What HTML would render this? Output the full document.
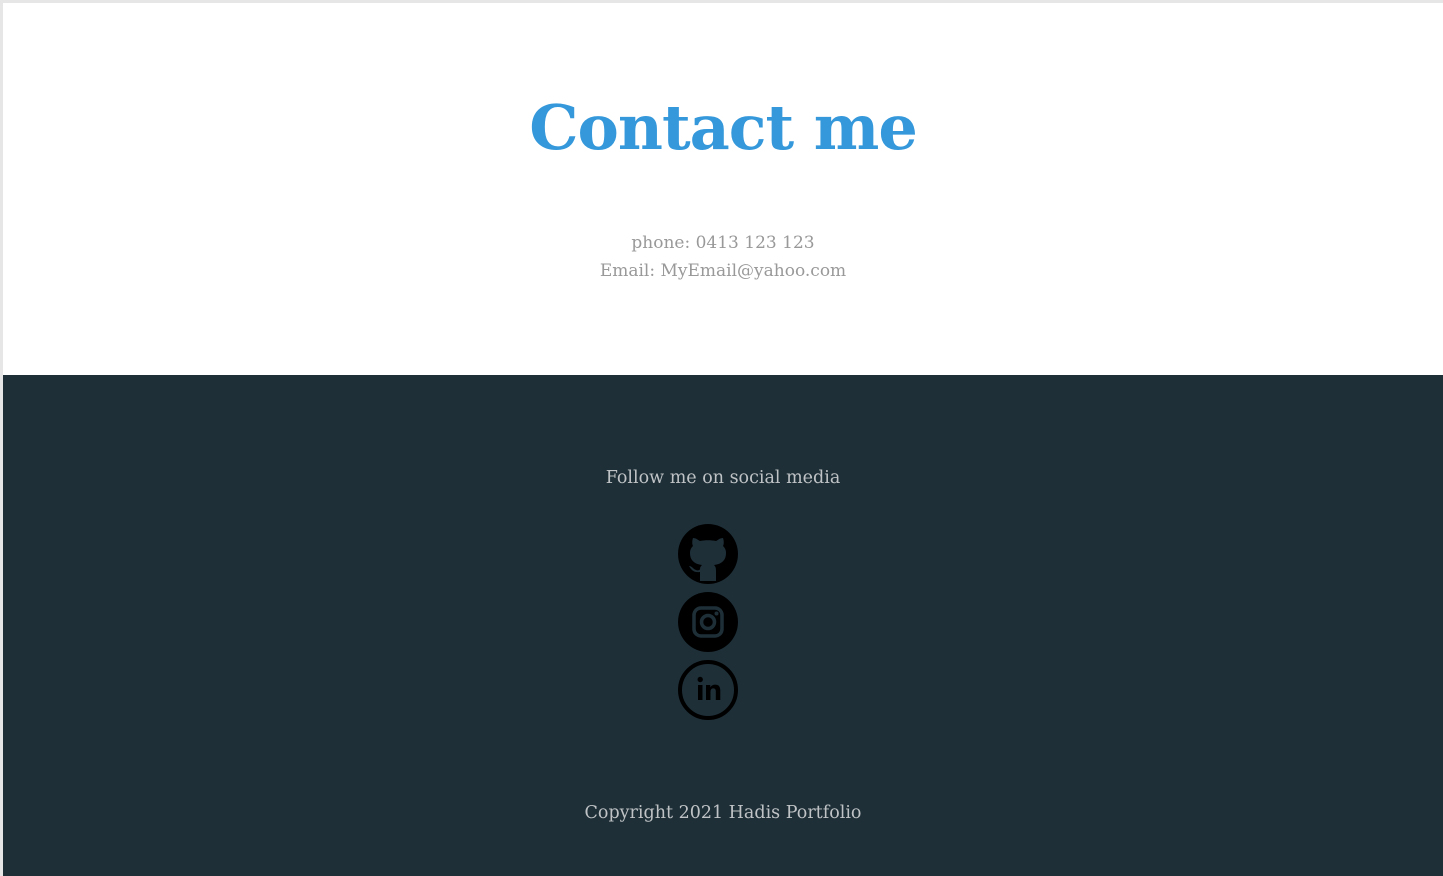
<!DOCTYPE html>
<html><head><style>
html,body{margin:0;padding:0;width:1443px;height:876px;overflow:hidden;background:#e6e6e6}
.top{position:absolute;left:3px;top:3px;width:1440px;height:372px;background:#fff;text-align:center;font-family:"DejaVu Serif","Liberation Serif",serif}
h1{margin:0;position:absolute;left:0;right:0;top:85px;font-size:62px;line-height:80px;color:#3498db;font-weight:bold;letter-spacing:-1px}
.info{position:absolute;left:0;right:0;top:226px;color:#999;font-size:17px;line-height:28px}
.foot{position:absolute;left:3px;top:375px;width:1440px;height:501px;background:#1e2f38;text-align:center;font-family:"DejaVu Serif","Liberation Serif",serif;color:#bfc3c5}
.f1{position:absolute;left:0;right:0;top:93px;font-size:17.5px}
.copy{position:absolute;left:0;right:0;top:428px;font-size:17.5px}
svg{position:absolute;left:675px}
</style></head><body>
<div class="top"><h1>Contact me</h1>
<div class="info">phone: 0413 123 123<br>Email: MyEmail@yahoo.com</div></div>
<div class="foot">
<div class="f1">Follow me on social media</div>
<svg style="top:149px" width="60" height="60" viewBox="0 0 60 60"><circle cx="30" cy="30" r="30" fill="#000"/><path d="M22 57 L22 48 C15 49 13 45 11 42 C14 42 15 45 18 46 C20 47 22 46 22 45 C22 43 23 42 24 41 C16 40 12 36 12 29 C12 26 13 24 15 22 C14 20 14 17 15 14 C18 14 20 16 22 17 C27 16 33 16 38 17 C40 16 42 14 45 14 C46 17 46 20 45 22 C47 24 48 26 48 29 C48 36 44 40 36 41 C38 43 38 45 38 47 L38 57 Z" fill="#1e2f38"/></svg>
<svg style="top:217px" width="60" height="60" viewBox="0 0 60 60"><circle cx="30" cy="30" r="30" fill="#000"/><rect x="16" y="16" width="28" height="28" rx="7" fill="none" stroke="#1e2f38" stroke-width="3.5"/><circle cx="30" cy="30" r="6.5" fill="none" stroke="#1e2f38" stroke-width="3.5"/><circle cx="38.5" cy="21.5" r="2" fill="#1e2f38"/></svg>
<svg style="top:285px" width="60" height="60" viewBox="0 0 60 60"><circle cx="30" cy="30" r="28" fill="none" stroke="#000" stroke-width="4"/><rect x="20" y="25" width="4.5" height="15" fill="#000"/><circle cx="22.2" cy="19.5" r="2.7" fill="#000"/><path d="M28 25 h4.3 v2.2 c1.2-1.8 3-2.6 5-2.6 c3.5 0 5 2.200 5 6 v9.4 h-4.5 v-8.6 c0-2-0.8-3-2.5-3 c-1.9 0-2.8 1.3-2.8 3.3 v8.3 h-4.5z" fill="#000"/></svg>
<div class="copy">Copyright 2021 Hadis Portfolio</div>
</div>
</body></html>
